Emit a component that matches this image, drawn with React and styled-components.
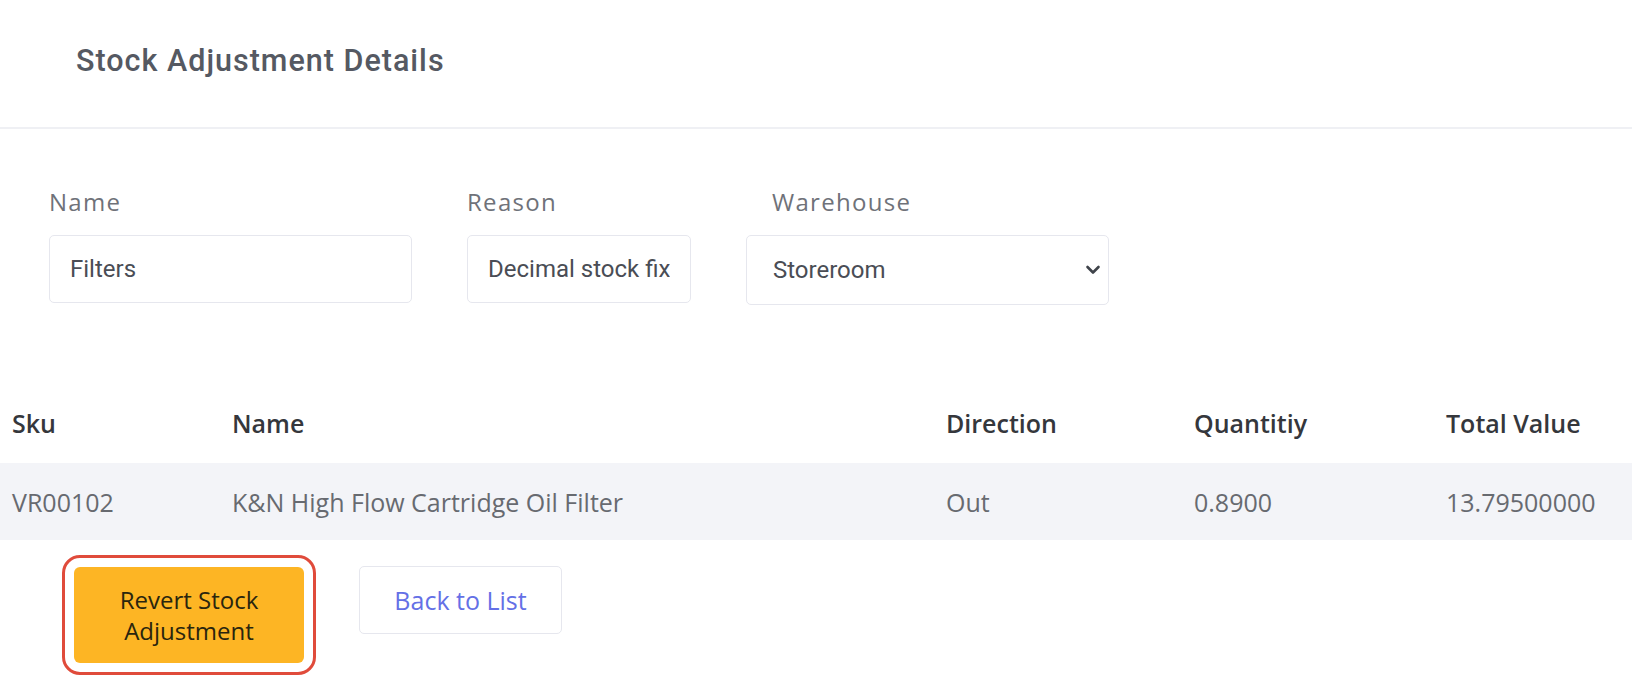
import React from 'react'
import styled, { createGlobalStyle } from 'styled-components'

const GlobalStyle = createGlobalStyle`
  html, body {
    margin: 0;
    padding: 0;
    background: #ffffff;
  }
  * {
    box-sizing: border-box;
  }
`

const rows = [
  { sku: 'VR00102', name: 'K&N High Flow Cartridge Oil Filter', direction: 'Out', qty: '0.8900', total: '13.79500000' },
]

export default function App() {
  return (
    <>
      <GlobalStyle />
      <Page>
        <Header>
          <Title>Stock Adjustment Details</Title>
        </Header>
        <Form>
          <Field>
            <Label>Name</Label>
            <Input width={363} value="Filters" readOnly />
          </Field>
          <Field>
            <Label>Reason</Label>
            <Input width={224} value="Decimal stock fix" readOnly />
          </Field>
          <Field>
            <Label indent={26}>Warehouse</Label>
            <SelectWrap>
              <Select defaultValue="storeroom">
                <option value="storeroom">Storeroom</option>
              </Select>
              <Chevron viewBox="0 0 16 16">
                <path d="M2.5 5l5.5 5.5 5.5-5.5" fill="none" stroke="#3f434a" strokeWidth="2.6" strokeLinecap="round" strokeLinejoin="round" />
              </Chevron>
            </SelectWrap>
          </Field>
        </Form>
        <Table>
          <HeadRow>
            <Cell>Sku</Cell>
            <Cell>Name</Cell>
            <Cell>Direction</Cell>
            <Cell>Quantitiy</Cell>
            <Cell>Total Value</Cell>
          </HeadRow>
          {rows.map((r) => (
            <BodyRow key={r.sku}>
              <Cell>{r.sku}</Cell>
              <Cell>{r.name}</Cell>
              <Cell>{r.direction}</Cell>
              <Cell>{r.qty}</Cell>
              <Cell>{r.total}</Cell>
            </BodyRow>
          ))}
        </Table>
        <Actions>
          <PrimaryButton>Revert Stock Adjustment</PrimaryButton>
          <SecondaryButton>Back to List</SecondaryButton>
        </Actions>
      </Page>
    </>
  )
}

const Page = styled.div`
  width: 100%;
  min-height: 683px;
  background: #fff;
`

const Header = styled.div`
  height: 129px;
  padding: 0 0 6px 76px;
  display: flex;
  align-items: center;
  border-bottom: 2px solid #eff0f4;
`

const Title = styled.h1`
  margin: 0;
  font-family: Roboto, "Liberation Sans", sans-serif;
  font-weight: 500;
  font-size: 30.5px;
  letter-spacing: 1px;
  color: #555962;
`

const Form = styled.div`
  display: flex;
  gap: 55px;
  padding: 57px 0 0 49px;
`

const Field = styled.div`
  display: flex;
  flex-direction: column;
`

const Label = styled.label`
  font-family: "Open Sans", sans-serif;
  font-weight: 400;
  font-size: 24px;
  line-height: 32px;
  letter-spacing: 1.3px;
  color: #6f7279;
  padding-left: ${(p) => p.indent || 0}px;
  margin-bottom: 17px;
`

const Input = styled.input`
  width: ${(p) => p.width}px;
  height: 68px;
  border: 1.5px solid #e6e7ee;
  border-radius: 5px;
  padding: 0 20px;
  font-family: Roboto, "Liberation Sans", sans-serif;
  font-size: 24px;
  color: #4a4d55;
  outline: none;
  background: #fff;
`

const SelectWrap = styled.div`
  position: relative;
  width: 363px;
  height: 70px;
`

const Select = styled.select`
  appearance: none;
  width: 100%;
  height: 100%;
  border: 1.5px solid #e6e7ee;
  border-radius: 5px;
  padding: 0 26px;
  font-family: Roboto, "Liberation Sans", sans-serif;
  font-size: 24px;
  color: #4a4d55;
  background: #fff;
  outline: none;
`

const Chevron = styled.svg`
  position: absolute;
  right: 8px;
  top: 27px;
  width: 16px;
  height: 16px;
  pointer-events: none;
`

const Table = styled.div`
  margin-top: 78px;
  display: flex;
  flex-direction: column;
`

const Row = styled.div`
  display: grid;
  grid-template-columns: 220px 714px 248px 252px 1fr;
  align-items: center;
`

const HeadRow = styled(Row)`
  height: 80px;
  font-family: "Open Sans", sans-serif;
  font-weight: 600;
  font-size: 25px;
  color: #35373c;
`

const BodyRow = styled(Row)`
  height: 77px;
  background: #f3f4f8;
  font-family: "Open Sans", sans-serif;
  font-weight: 400;
  font-size: 25px;
  color: #676a70;
`

const Cell = styled.div`
  padding-left: 12px;
  white-space: nowrap;
`

const Actions = styled.div`
  display: flex;
  align-items: flex-start;
  gap: 55px;
  padding: 27px 0 0 74px;
`

const PrimaryButton = styled.button`
  width: 230px;
  height: 96px;
  border: none;
  border-radius: 6px;
  background: #fdb524;
  color: #2a250e;
  font-family: "Open Sans", sans-serif;
  font-weight: 400;
  font-size: 24px;
  line-height: 31px;
  padding: 0 30px;
  outline: 3px solid #e04b3b;
  outline-offset: 9px;
  cursor: pointer;
`

const SecondaryButton = styled.button`
  width: 203px;
  height: 68px;
  margin-top: -1px;
  border: 1.5px solid #e6e7ee;
  border-radius: 5px;
  background: #fff;
  color: #6470e6;
  font-family: "Open Sans", sans-serif;
  font-size: 25px;
  cursor: pointer;
`
